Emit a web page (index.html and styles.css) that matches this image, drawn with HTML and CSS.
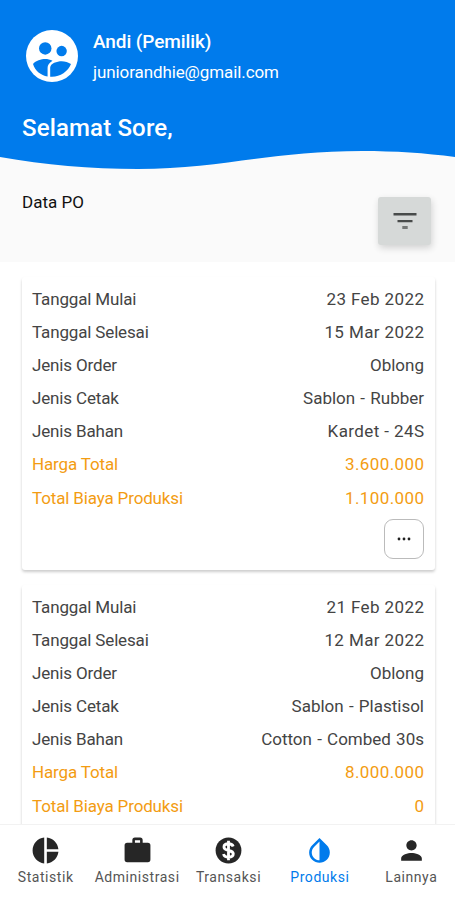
FILE: index.html
```html
<!DOCTYPE html>
<html lang="id">
<head>
    <meta charset="UTF-8">
    <meta name="viewport" content="width=device-width, initial-scale=1">
    <title>Produksi</title>
    <link rel="stylesheet" href="styles.css">
</head>
<body>
<div class="app">
    <header class="header">
        <div class="profile">
            <svg class="avatar" viewBox="2 2 20 20">
                <circle cx="12" cy="12" r="10" fill="#fff"/>
                <g fill="#007bec">
                    <circle cx="9.4" cy="9.1" r="2.4"/>
                    <circle cx="15.7" cy="10.1" r="2"/>
                    <path d="M4.7 15.1c1-1.3 3.2-1.900 4.700-1.900.9 0 1.900.2 2.800.6-1.400.8-1.900 1.800-1.900 2.800v3.300c-2.600-.4-4.800-2.200-5.600-4.800z"/>
                    <path d="M11.300 20v-3.500c0-1.700 2.700-2.500 4.400-2.500 1.200 0 2.700.4 3.600 1.100-1.200 2.900-4.100 4.900-7.300 4.900z"/>
                </g>
            </svg>
            <div>
                <div class="name">Andi (Pemilik)</div>
                <div class="email">juniorandhie@gmail.com</div>
            </div>
        </div>
        <h1 class="greeting">Selamat Sore,</h1>
    </header>

    <section class="toolbar">
        <svg class="wave" viewBox="0 0 455 20" preserveAspectRatio="none">
            <path fill="#007bec" d="M0 0H455V7C425 3 395 1 362 1C270 1 220 19 138 19C90 19 45 15 0 7Z"/>
        </svg>
        <div class="toolbar-row">
            <h2 class="title">Data PO</h2>
            <button class="btn-filter" aria-label="Filter">
                <svg viewBox="0 0 24 17" width="24" height="17"><path fill="#484b4a" d="M.5 0h23v2.400H.5zM4.500 7h15v2.300h-15z"/><path fill="#747776" d="M9.300 13h5.400v3H9.300z"/></svg>
            </button>
        </div>
    </section>

    <main class="list">
        <article class="card">
            <div class="row"><span>Tanggal Mulai</span><span class="num">23 Feb 2022</span></div>
            <div class="row"><span>Tanggal Selesai</span><span class="num">15 Mar 2022</span></div>
            <div class="row"><span>Jenis Order</span><span class="text">Oblong</span></div>
            <div class="row"><span>Jenis Cetak</span><span class="text">Sablon - Rubber</span></div>
            <div class="row"><span>Jenis Bahan</span><span class="num">Kardet - 24S</span></div>
            <div class="row price"><span>Harga Total</span><span class="num">3.600.000</span></div>
            <div class="row price"><span>Total Biaya Produksi</span><span class="num">1.100.000</span></div>
            <button class="btn-more" aria-label="Menu">
                <svg viewBox="0 0 14 4" width="14" height="4" fill="#222"><circle cx="2" cy="2" r="1.400"/><circle cx="7" cy="2" r="1.400"/><circle cx="12" cy="2" r="1.400"/></svg>
            </button>
        </article>

        <article class="card">
            <div class="row"><span>Tanggal Mulai</span><span class="num">21 Feb 2022</span></div>
            <div class="row"><span>Tanggal Selesai</span><span class="num">12 Mar 2022</span></div>
            <div class="row"><span>Jenis Order</span><span class="text">Oblong</span></div>
            <div class="row"><span>Jenis Cetak</span><span class="text">Sablon - Plastisol</span></div>
            <div class="row"><span>Jenis Bahan</span><span class="text">Cotton - Combed 30s</span></div>
            <div class="row price"><span>Harga Total</span><span class="num">8.000.000</span></div>
            <div class="row price"><span>Total Biaya Produksi</span><span class="num">0</span></div>
        </article>
    </main>

    <nav class="nav">
        <a class="nav-item">
            <svg viewBox="0 0 24 24"><path d="M11 2v20c-5.070-.5-9-4.790-9-10s3.930-9.500 9-10zm2.030 0v8.990H22c-.470-4.740-4.240-8.520-8.970-8.990zm0 11.010V22c4.740-.470 8.500-4.250 8.970-8.990z"/></svg>
            <span>Statistik</span>
        </a>
        <a class="nav-item">
            <svg viewBox="0 0 24 24"><path d="M10 2h4a2 2 0 0 1 2 2v2h4a2 2 0 0 1 2 2v11a2 2 0 0 1-2 2H4a2 2 0 0 1-2-2V8a2 2 0 0 1 2-2h4V4a2 2 0 0 1 2-2zm4 4V4h-4v2z"/></svg>
            <span>Administrasi</span>
        </a>
        <a class="nav-item">
            <svg viewBox="0 0 24 24"><circle cx="12" cy="12" r="10"/><path class="dollar" d="M12 4.500v15M15.600 8.900C15.200 7.500 13.900 6.800 12 6.800c-2.100 0-3.500.9-3.500 2.500 0 3.700 7.200 1.700 7.200 5.300 0 1.700-1.500 2.600-3.600 2.600-2.200 0-3.600-.9-3.900-2.500"/></svg>
            <span>Transaksi</span>
        </a>
        <a class="nav-item active">
            <svg viewBox="0 0 24 24"><path d="M17.660 7.930L12 2.270 6.340 7.930c-3.120 3.120-3.120 8.190 0 11.310C7.900 20.800 9.950 21.580 12 21.580s4.100-.780 5.660-2.340c3.120-3.120 3.120-8.190 0-11.310zM12 19.590c-1.600 0-3.110-.620-4.240-1.760C6.620 16.690 6 15.190 6 13.590s.620-3.110 1.760-4.240L12 5.100v14.490z"/></svg>
            <span>Produksi</span>
        </a>
        <a class="nav-item">
            <svg viewBox="0 0 24 24"><path d="M12 12c2.210 0 4-1.790 4-4s-1.790-4-4-4-4 1.790-4 4 1.790 4 4 4zm0 2c-2.670 0-8 1.340-8 4v2h16v-2c0-2.660-5.330-4-8-4z"/></svg>
            <span>Lainnya</span>
        </a>
    </nav>
</div>
</body>
</html>
```
FILE: styles.css
```css
* {
    box-sizing: border-box;
}

body {
    margin: 0;
    background-color: #fff;
    color: #444;
    font-family: Roboto, "Noto Sans", sans-serif;
}

button {
    display: flex;
    align-items: center;
    justify-content: center;
    padding: 0;
}

.app {
    display: flex;
    flex-direction: column;
    height: 900px;
    overflow: hidden;
}

.header {
    flex: none;
    height: 150px;
    padding: 30px 22px 0;
    background-color: #007bec;
    color: #fff;
}

.profile {
    display: flex;
    gap: 15px;
    height: 52px;
    padding-left: 4px;
}

.avatar {
    width: 52px;
    height: 52px;
}

.name {
    font-size: 19px;
    font-weight: 500;
    line-height: 24px;
    letter-spacing: -0.1px;
}

.email {
    margin-top: 6px;
    font-size: 17px;
    line-height: 24px;
    letter-spacing: -0.1px;
}

.greeting {
    margin: 31px 0 0;
    font-size: 24px;
    font-weight: 500;
    line-height: 30px;
    letter-spacing: 0.15px;
}

.toolbar {
    flex: none;
    height: 112px;
    background-color: #fafafa;
}

.wave {
    display: block;
    width: 100%;
    height: 20px;
}

.toolbar-row {
    display: flex;
    justify-content: space-between;
    padding: 20px 24px 0 22px;
}

.title {
    margin: 0;
    color: #111;
    font-size: 17px;
    font-weight: 400;
    line-height: 24px;
}

.btn-filter {
    width: 53px;
    height: 48px;
    margin-top: 7px;
    border: none;
    border-radius: 3px;
    background-color: #d6d9d8;
    box-shadow: 1px 3px 7px rgba(0, 0, 0, 0.16);
}

.list {
    flex: 1;
    min-height: 0;
    padding: 15px 20px 0 22px;
    overflow: hidden;
}

.card {
    height: 293px;
    margin-bottom: 15px;
    padding: 6px 11px 0 10px;
    border-radius: 3px;
    box-shadow: 0 2px 3px rgba(0, 0, 0, 0.2);
}

.row {
    display: flex;
    justify-content: space-between;
    font-size: 17px;
    line-height: 33.1px;
    letter-spacing: -0.15px;
}

.row .num {
    margin-right: -0.4px;
    letter-spacing: 0.4px;
}

.row .text {
    letter-spacing: 0;
    word-spacing: 1px;
}

.price {
    color: #f39c12;
}

.btn-more {
    width: 40px;
    height: 40px;
    margin: 4px 0 0 auto;
    border: 1px solid #bbb;
    border-radius: 9px;
    background-color: #fff;
}

.nav {
    display: flex;
    flex: none;
    width: 457px;
    height: 76px;
    padding-top: 10px;
    border-top: 1px solid #f2f2f2;
    background-color: #fff;
}

.nav-item {
    display: flex;
    flex: 1;
    flex-direction: column;
    align-items: center;
    min-width: 0;
    color: #555;
    font-size: 14px;
    line-height: 22px;
    letter-spacing: 0.55px;
}

.nav-item svg {
    width: 31px;
    height: 31px;
    fill: #262626;
}

.nav-item .dollar {
    fill: none;
    stroke: #fff;
    stroke-width: 2.2;
}

.nav-item.active {
    color: #007bec;
}

.nav-item.active svg {
    fill: #007bec;
}
```
